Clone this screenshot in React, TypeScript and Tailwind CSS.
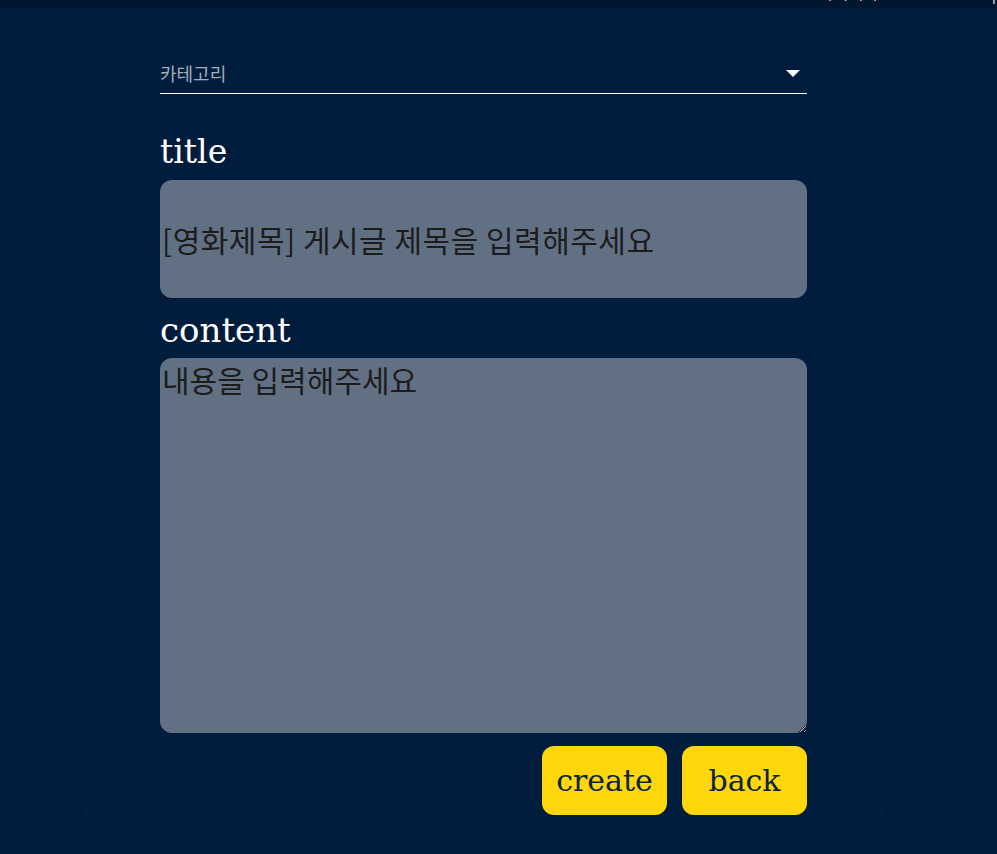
import React, { useState } from 'react';

const serif = "font-['DejaVu_Serif',serif]";
const kr = "font-['Noto_Sans_CJK_KR',sans-serif]";

const App: React.FC = () => {
    const [title, setTitle] = useState('');
    const [content, setContent] = useState('');

    return (
        <div className="min-h-screen bg-[#001d3d] flex flex-col">
            {/* header, scrolled mostly out of view */}
            <header className="h-[8px] bg-[#00172f] overflow-hidden flex items-start justify-end">
                <div className={`shrink-0 -mt-[18px] flex gap-[114px] pr-[1px] text-white text-[16px] leading-[20px] ${kr}`}>
                    <span>마이페이</span>
                    <span>|</span>
                </div>
            </header>

            {/* form panel */}
            <main className="ml-[80px] w-[808px] border-x border-b border-[#001934] rounded-b-2xl pl-[79px] pr-[80px] pt-[46px] pb-[11px]">
                <div className="h-[40px] border-b border-white flex items-center justify-between cursor-pointer">
                    <span className={`text-[18px] text-[#a3adbb] ${kr}`}>카테고리</span>
                    <svg width="14" height="7" viewBox="0 0 14 7" className="mr-[7px] -mt-[1px]">
                        <path d="M0 0 L14 0 L7 7 Z" fill="#ffffff" />
                    </svg>
                </div>

                <label className={`block mt-[38px] h-[40px] leading-[40px] text-[33px] text-white ${serif}`}>title</label>
                <input
                    type="text"
                    value={title}
                    onChange={(e) => setTitle(e.target.value)}
                    placeholder="[영화제목] 게시글 제목을 입력해주세요"
                    className={`mt-2 block w-full h-[118px] rounded-xl bg-[#627084] px-[2px] text-[30px] tracking-[0.5px] text-[#1c1c1c] placeholder-[#1c1c1c] outline-none ${kr}`}
                />

                <label className={`block mt-3 h-[40px] leading-[40px] text-[34px] text-white ${serif}`}>content</label>
                <textarea
                    value={content}
                    onChange={(e) => setContent(e.target.value)}
                    placeholder="내용을 입력해주세요"
                    className={`mt-2 block w-full h-[375px] rounded-xl bg-[#627084] px-[2px] text-[30px] leading-[1.4] text-[#1c1c1c] placeholder-[#1c1c1c] outline-none ${kr}`}
                />

                <div className="mt-[13px] flex justify-end gap-[15px]">
                    <button className={`w-[125px] h-[69px] rounded-xl bg-[#ffd60a] text-[30px] text-[#0a2540] ${serif}`}>create</button>
                    <button className={`w-[125px] h-[69px] rounded-xl bg-[#ffd60a] text-[30px] text-[#0a2540] ${serif}`}>back</button>
                </div>
            </main>
        </div>
    );
};

export default App;
